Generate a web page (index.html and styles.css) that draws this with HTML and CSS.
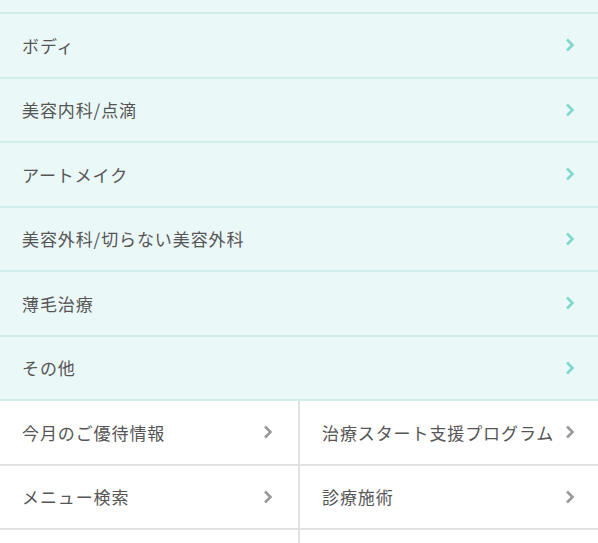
FILE: index.html
```html
<!DOCTYPE html>
<html lang="ja">
<head>
  <meta charset="UTF-8" />
  <meta name="viewport" content="width=device-width, initial-scale=1.0" />
  <title>メニュー</title>
  <link rel="stylesheet" href="styles.css">
</head>
<body>

  <div class="menu-top"></div>
  <ul class="menu-list">
    <li><a href="#">ボディ<svg class="arrow" viewBox="0 0 10 14"><polyline points="2,1.5 7.5,7 2,12.5" /></svg></a></li>
    <li><a href="#">美容内科/点滴<svg class="arrow" viewBox="0 0 10 14"><polyline points="2,1.5 7.5,7 2,12.5" /></svg></a></li>
    <li><a href="#">アートメイク<svg class="arrow" viewBox="0 0 10 14"><polyline points="2,1.5 7.5,7 2,12.5" /></svg></a></li>
    <li><a href="#">美容外科/切らない美容外科<svg class="arrow" viewBox="0 0 10 14"><polyline points="2,1.5 7.5,7 2,12.5" /></svg></a></li>
    <li><a href="#">薄毛治療<svg class="arrow" viewBox="0 0 10 14"><polyline points="2,1.5 7.5,7 2,12.5" /></svg></a></li>
    <li><a href="#">その他<svg class="arrow" viewBox="0 0 10 14"><polyline points="2,1.5 7.5,7 2,12.5" /></svg></a></li>
  </ul>

  <div class="sub-links">
    <a href="#">今月のご優待情報<svg class="arrow" viewBox="0 0 10 14"><polyline points="2,1.5 7.5,7 2,12.5" /></svg></a>
    <a href="#">治療スタート支援プログラム<svg class="arrow" viewBox="0 0 10 14"><polyline points="2,1.5 7.5,7 2,12.5" /></svg></a>
    <a href="#">メニュー検索<svg class="arrow" viewBox="0 0 10 14"><polyline points="2,1.5 7.5,7 2,12.5" /></svg></a>
    <a href="#">診療施術<svg class="arrow" viewBox="0 0 10 14"><polyline points="2,1.5 7.5,7 2,12.5" /></svg></a>
    <a href="#" class="empty"></a>
    <a href="#" class="empty"></a>
  </div>

</body>
</html>
```

FILE: styles.css
```css
* {
  box-sizing: border-box;
}

body {
  margin: 0;
  font-family: "Noto Sans CJK JP", "Noto Sans", sans-serif;
  background: #fff;
  color: #555;
}

.menu-top {
  height: 14px;
  background: #ebf8f8;
  border-bottom: 2px solid #cfefec;
}

.menu-list {
  list-style: none;
  margin: 0;
  padding: 0;
}

.menu-list li {
  background: #ebf8f8;
  border-bottom: 2px solid #cfefec;
}

.menu-list a {
  display: flex;
  align-items: center;
  justify-content: space-between;
  height: 62.5px;
  padding: 0 23px 0 22px;
  color: #555;
  text-decoration: none;
  font-size: 17px;
  letter-spacing: 0.9px;
}

.arrow {
  width: 10px;
  height: 14px;
  flex-shrink: 0;
}

.arrow polyline {
  fill: none;
  stroke: #7ed8cc;
  stroke-width: 2.6;
}

.sub-links {
  display: grid;
  grid-template-columns: 300px 1fr;
}

.sub-links a {
  display: flex;
  align-items: center;
  justify-content: space-between;
  height: 64.5px;
  padding: 0 23px 0 22px;
  color: #555;
  text-decoration: none;
  font-size: 17px;
  letter-spacing: 0.9px;
  border-bottom: 2px solid #e2e2e2;
}

.sub-links a:nth-child(odd) {
  border-right: 2px solid #e2e2e2;
  padding-right: 25px;
}

.sub-links .arrow polyline {
  stroke: #999;
}
```
